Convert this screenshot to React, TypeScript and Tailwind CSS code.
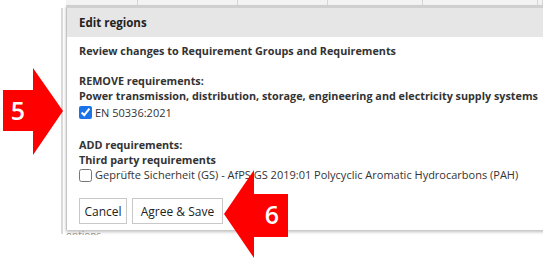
const COLS = [72, 100, 90, 95, 115, 5];

function PageBehind() {
  return (
    <div className="flex h-full flex-col">
      {/* table header strip of the page under the dialog */}
      <div className="ml-[66px] flex h-[6px] bg-[#f3f3f3]">
        {COLS.map((w, i) => (
          <div key={i} className="h-full border-r border-[#d6d6d6]" style={{ width: w }} />
        ))}
      </div>
      <div className="flex flex-1">
        <div className="ml-[61px] mt-[2px] h-[226px] w-[2px] bg-[#d9d9d9]" />
      </div>
    </div>
  );
}

function Arrows() {
  return (
    <>
      <svg className="absolute left-0 top-[60px]" width="66" height="100" viewBox="0 0 66 100">
        <polygon points="3,30 33,30 33,8 63,51 33,95 33,71 3,71" fill="#ff0000" />
        <text x="18" y="60" textAnchor="middle" fill="#fff" fontSize="25" fontFamily="Open Sans, sans-serif" fontWeight="600">5</text>
      </svg>
      <svg className="absolute left-[220px] top-[168px]" width="72" height="91" viewBox="0 0 72 91">
        <polygon points="68,26 34,26 34,2 4,46 34,90 34,69 68,69" fill="#ff0000" />
        <text x="52" y="56" textAnchor="middle" fill="#fff" fontSize="25" fontFamily="Open Sans, sans-serif" fontWeight="600">6</text>
      </svg>
    </>
  );
}

export default function App() {
  return (
    <div className="relative h-[259px] w-[543px] overflow-hidden bg-white font-['Open_Sans',sans-serif] text-[#333]">
      <PageBehind />

      {/* clipped label of the page below the dialog */}
      <div className="absolute left-[66px] top-[231px] h-[4px] overflow-hidden">
        <div className="-mt-[1px] text-[10px] leading-[10px] text-[#999]">options</div>
      </div>

      {/* Dialog */}
      <div className="absolute left-[66px] top-[5px] w-[520px] border-t-[3px] border-[#cfcfcf] shadow-[0_2px_3px_rgba(0,0,0,0.25)]">
        <div className="border-l border-[#c4c4c4] bg-white">
          <div className="flex h-[29px] items-center bg-[#e6e6e6] px-[12px] pt-[1px] text-[11.5px] font-bold text-[#222]">
            Edit regions
          </div>
          <div className="px-[12px] pb-[6px] pt-[6px] text-[11px] leading-[15px]">
            <div className="text-[10.8px] font-bold">Review changes to Requirement Groups and Requirements</div>

            <div className="mt-[15px] text-[10.8px] font-bold">REMOVE requirements:</div>
            <div className="text-[10.8px] font-bold">Power transmission, distribution, storage, engineering and electricity supply systems</div>
            <label className="mt-[1px] flex items-center gap-[3px] leading-[17px]">
              <input type="checkbox" defaultChecked className="m-0 h-[13px] w-[13px] accent-[#1a73e8]" />
              <span>EN 50336:2021</span>
            </label>

            <div className="mt-[16px] text-[10.8px] font-bold">ADD requirements:</div>
            <div className="text-[10.8px] font-bold">Third party requirements</div>
            <label className="flex items-center gap-[3px] leading-[16px]">
              <input type="checkbox" className="m-0 h-[13px] w-[13px]" />
              <span>Geprüfte Sicherheit (GS) - AfPS GS 2019:01 Polycyclic Aromatic Hydrocarbons (PAH)</span>
            </label>

            <div className="mt-[15px] flex gap-[5px]">
              <button className="h-[26px] w-[48px] border border-[#c8c8c8] bg-white text-[12px] text-[#222]">Cancel</button>
              <button className="h-[26px] w-[91px] border border-[#c8c8c8] bg-white text-[12px] text-[#222]">Agree &amp; Save</button>
            </div>
          </div>
        </div>
      </div>

      <Arrows />
    </div>
  );
}
